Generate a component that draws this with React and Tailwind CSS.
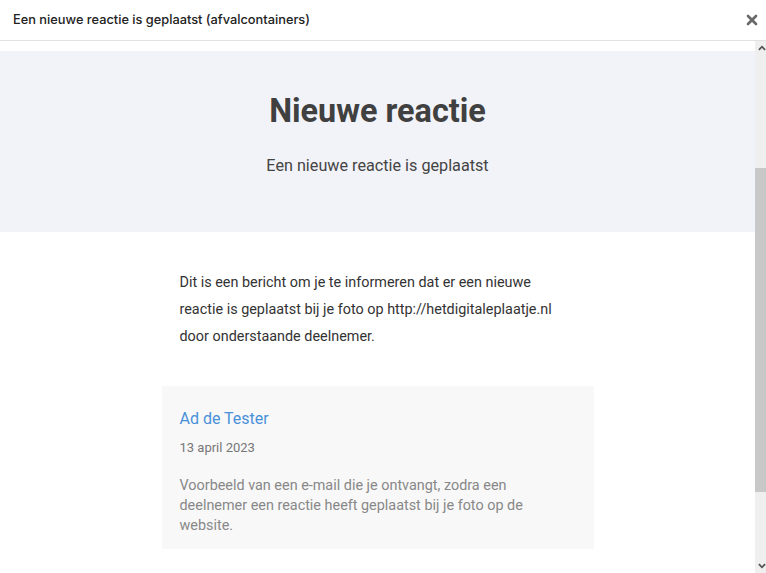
import { X } from 'lucide-react';

const App = () => {
  return (
    <div className="h-[573px] w-[766px] overflow-hidden bg-white flex flex-col font-['Roboto',sans-serif]">
      {/* Modal header */}
      <div className="h-[41px] shrink-0 flex items-center justify-between border-b border-[#e2e2e2] pl-[13px] pr-[6px]">
        <span className="font-['Inter',sans-serif] text-[12.8px] font-medium text-[#222]">
          Een nieuwe reactie is geplaatst (afvalcontainers)
        </span>
        <X className="w-[16px] h-[16px] text-[#6a6a6a]" strokeWidth={4} />
      </div>

      {/* Body with scrollbar */}
      <div className="flex flex-1 min-h-0">
        <div className="flex-1 pt-[10px] overflow-hidden">
          {/* Hero */}
          <div className="bg-[#f2f3f8] h-[181px] flex flex-col items-center pt-[41px]">
            <h1 className="text-[32.4px] leading-[38px] font-bold text-[#404040]">Nieuwe reactie</h1>
            <p className="mt-[25px] text-[16.2px] leading-[22px] text-[#444]">Een nieuwe reactie is geplaatst</p>
          </div>

          {/* Content column */}
          <div className="w-[432px] mx-auto">
            <p className="pl-[18px] pt-[37px] pr-[30px] text-[14.4px] leading-[27px] text-[#333]">
              Dit is een bericht om je te informeren dat er een nieuwe reactie is geplaatst bij je foto op http://hetdigitaleplaatje.nl door onderstaande deelnemer.
            </p>

            <div className="mt-[36px] bg-[#f8f8f8] pl-[18px] pr-[40px] pt-[23px] pb-[13px]">
              <div className="text-[16px] leading-[20px] text-[#4a90d9]">Ad de Tester</div>
              <div className="mt-[10px] text-[13px] leading-[18px] text-[#777]">13 april 2023</div>
              <p className="mt-[19px] text-[14.4px] leading-[20px] text-[#888]">
                Voorbeeld van een e-mail die je ontvangt, zodra een deelnemer een reactie heeft geplaatst bij je foto op de website.
              </p>
            </div>
          </div>
        </div>

        {/* Scrollbar */}
        <div className="w-[11px] shrink-0 bg-[#efefef] flex flex-col">
          <div className="h-[14px] flex items-center justify-center">
            <svg width="9" height="6" viewBox="0 0 9 6" className="ml-[3px]">
              <path d="M1 5 L4.5 1.5 L8 5" fill="none" stroke="#555" strokeWidth="2" />
            </svg>
          </div>
          <div className="mt-[113px] h-[324px] bg-[#c8c8c8]" />
          <div className="flex-1" />
          <div className="h-[14px] flex items-center justify-center">
            <svg width="9" height="6" viewBox="0 0 9 6" className="ml-[3px]">
              <path d="M1 1 L4.5 4.5 L8 1" fill="none" stroke="#555" strokeWidth="2" />
            </svg>
          </div>
        </div>
      </div>
    </div>
  );
};

export default App;
